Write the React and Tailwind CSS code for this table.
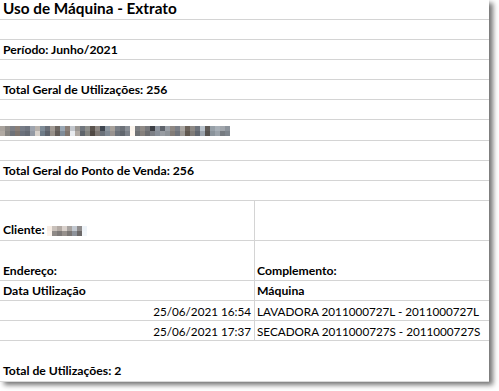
import React from "react";

const font = { fontFamily: "Lato, 'Noto Sans', sans-serif" };

// Mosaic tones used to mask private names
const mosaicTop = [
  "#a9a39d", "#8e8b88", "#7d7f86", "#8a7f78", "#777d88", "#6f7580", "#9ea4ae", "#b8b2ad",
  "#7f8c98", "#6a6f78", "#a19a94", "#6d6762", "#9aa7b4", "#8b8079", "#c2c6cc", "#9b9793",
  "#70767d", "#8e8f8c", "#5a534e", "#8d8783", "#3f4650", "#8c96a0", "#a7a19b", "#7a7f86",
  "#6c7178", "#8a8f96", "#fbf5ee", "#7b7d80", "#8f8a86", "#77787b", "#3d3f45", "#8f96a0",
  "#5e636b", "#9a9fa6", "#8e8883", "#7b7f86", "#a9a5a1", "#6c635b", "#8d8985", "#6f747c",
  "#b7c0c9", "#5f5b58", "#97a0a8", "#a8b0b8", "#a1a6ac", "#8d949c"
];
const mosaicBottom = [
  "#b1aaa3", "#868481", "#6e7279", "#7d746e", "#6b717c", "#646a74", "#949aa4", "#d8d2cc",
  "#6f7c88", "#5d626b", "#979089", "#625c58", "#7f8c99", "#7f756e", "#e8ebef", "#b0a9a3",
  "#5e646b", "#838480", "#504944", "#7e7874", "#6a717a", "#7f8994", "#999390", "#6d727a",
  "#61666d", "#7c8189", "#fff8f0", "#6f7174", "#85807c", "#6c6d70", "#7c7f86", "#888f99",
  "#989ca2", "#8d9298", "#827c77", "#6f737a", "#9b9793", "#60574f", "#807c78", "#62676f",
  "#9aa2ab", "#56524f", "#8a939b", "#9ba3ab", "#767b81", "#7e858d"
];
const clienteTop = ["#f6ece4", "#c9c1bb", "#b3aaa4", "#d9d1cc", "#a8a3a0", "#c2c8d0", "#8f8c8c", "#eef3f8"];
const clienteBottom = ["#fbf3ec", "#8f8a87", "#7e7a78", "#96908c", "#7a7674", "#8d929a", "#6b6868", "#f2f6fa"];

function Mosaic({ top, bottom }) {
  return (
    <div className="flex flex-col">
      <div className="flex">
        {top.map((c, i) => (
          <span key={i} className="block h-[5px] w-[5px]" style={{ backgroundColor: c }} />
        ))}
      </div>
      <div className="flex">
        {bottom.map((c, i) => (
          <span key={i} className="block h-[5px] w-[5px]" style={{ backgroundColor: c }} />
        ))}
      </div>
    </div>
  );
}

function Label({ children }) {
  return <span className="text-[12.2px] font-bold">{children}</span>;
}

function Row({ h, children, className = "" }) {
  return (
    <div className={`flex items-end border-b border-[#d4d4d4] px-[3px] pb-[2px] ${h} ${className}`}>
      {children}
    </div>
  );
}

function SplitRow({ h, left, right, leftClass = "" }) {
  return (
    <div className={`grid grid-cols-[255px_1fr] border-b border-[#d4d4d4] ${h}`}>
      <div className={`flex items-end border-r border-[#d4d4d4] px-[3px] pb-[2px] ${leftClass}`}>{left}</div>
      <div className="flex items-end px-[2px] pb-[2px]">{right}</div>
    </div>
  );
}

export default function App() {
  return (
    <div className="h-[391px] w-[499px] bg-white text-[11.7px] leading-[14px] text-black" style={font}>
      <div className="flex h-[382px] w-[489px] flex-col border-b border-[#d8d8d8] bg-white shadow-[4px_3px_5px_rgba(0,0,0,0.55)]">
        <Row h="h-[20px]">
          <span className="text-[15.3px] font-bold leading-[17px]">Uso de Máquina - Extrato</span>
        </Row>
        <Row h="h-[20px]" />
        <Row h="h-[20px]">
          <Label>Período: Junho/2021</Label>
        </Row>
        <Row h="h-[20px]" />
        <Row h="h-[20px]">
          <Label>Total Geral de Utilizações: 256</Label>
        </Row>
        <Row h="h-[20px]" />
        <div className="flex h-[21px] items-center border-b border-[#d4d4d4] pt-[1px]">
          <Mosaic top={mosaicTop} bottom={mosaicBottom} />
        </div>
        <Row h="h-[20px]" />
        <Row h="h-[20px]">
          <Label>Total Geral do Ponto de Venda: 256</Label>
        </Row>
        <Row h="h-[20px]" />
        <SplitRow
          h="h-[40px]"
          leftClass="pb-[3px]"
          left={
            <div className="flex items-end gap-[2px]">
              <Label>Cliente:</Label>
              <div className="mb-[1px]">
                <Mosaic top={clienteTop} bottom={clienteBottom} />
              </div>
            </div>
          }
          right={null}
        />
        <SplitRow
          h="h-[40px]"
          left={<Label>Endereço:</Label>}
          right={<Label>Complemento:</Label>}
        />
        <SplitRow
          h="h-[20px]"
          left={<Label>Data Utilização</Label>}
          right={<Label>Máquina</Label>}
        />
        <SplitRow
          h="h-[20px]"
          leftClass="justify-end"
          left={<span>25/06/2021 16:54</span>}
          right={<span>LAVADORA 2011000727L - 2011000727L</span>}
        />
        <SplitRow
          h="h-[20px]"
          leftClass="justify-end"
          left={<span>25/06/2021 17:37</span>}
          right={<span>SECADORA 2011000727S - 2011000727S</span>}
        />
        <div className="flex flex-1 items-end px-[3px] pb-[3px]">
          <Label>Total de Utilizações: 2</Label>
        </div>
      </div>
    </div>
  );
}
